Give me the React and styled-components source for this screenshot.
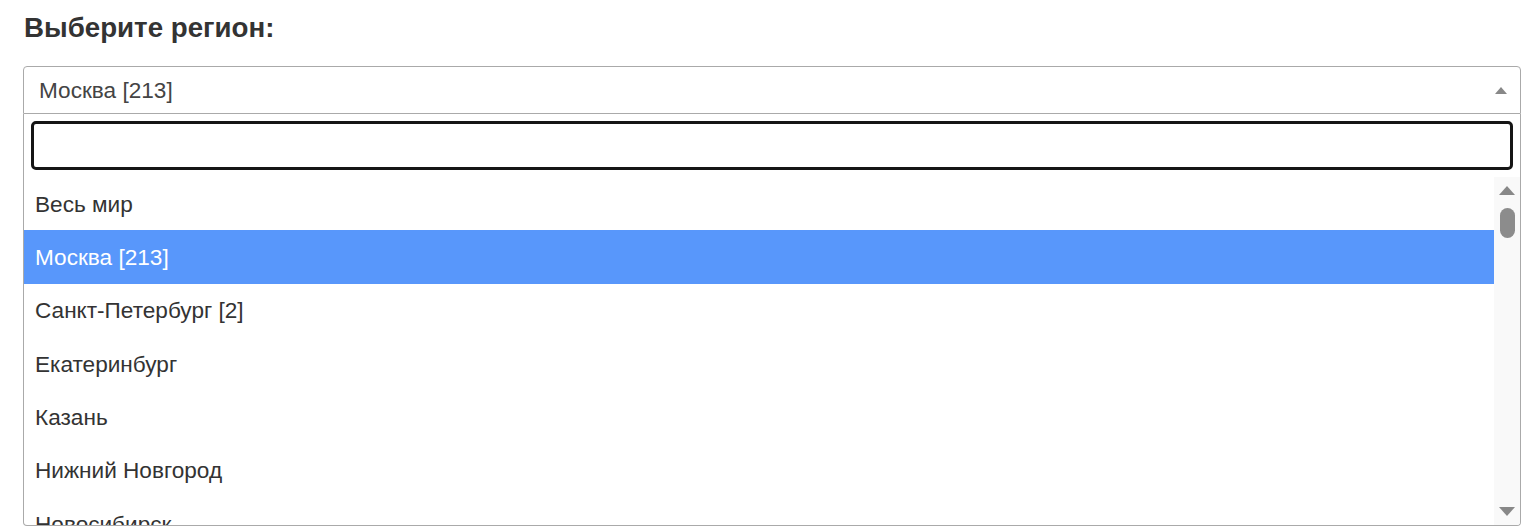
import React from "react";
import styled, { createGlobalStyle } from "styled-components";

const GlobalStyle = createGlobalStyle`
  html, body {
    margin: 0;
    padding: 0;
    background: #fff;
    font-family: "Liberation Sans", Arial, sans-serif;
  }
`;

const Page = styled.div`
  padding: 8px 13px 0 23px;
  height: 532px;
  box-sizing: border-box;
  overflow: hidden;
`;

const Title = styled.h2`
  margin: 0 0 18px 1px;
  height: 40px;
  line-height: 40px;
  font-size: 27.7px;
  font-weight: bold;
  color: #333;
`;

const Select = styled.div`
  width: 1498px;
  box-sizing: border-box;
`;

const Selection = styled.div`
  display: flex;
  align-items: center;
  justify-content: space-between;
  height: 48px;
  box-sizing: border-box;
  border: 1px solid #aaa;
  border-radius: 4px 4px 0 0;
  padding: 2px 13px 0 15px;
  font-size: 22.6px;
  color: #444;
`;

const Arrow = styled.span`
  width: 0;
  height: 0;
  border-left: 6px solid transparent;
  border-right: 6px solid transparent;
  border-bottom: 7px solid #888;
  margin-top: -1px;
`;

const Dropdown = styled.div`
  border: 1px solid #aaa;
  border-top: none;
  border-radius: 0 0 4px 4px;
  height: 412px;
  box-sizing: border-box;
  display: flex;
  flex-direction: column;
  overflow: hidden;
`;

const SearchWrap = styled.div`
  padding: 7px;
  flex: none;
`;

const Search = styled.input`
  display: block;
  width: 100%;
  height: 49px;
  box-sizing: border-box;
  border: 3px solid #151515;
  border-radius: 5px;
  outline: none;
  font-size: 22px;
  font-family: inherit;
  padding: 0 8px;
`;

const Results = styled.div`
  flex: 1;
  display: flex;
  min-height: 0;
`;

const Options = styled.ul`
  flex: 1;
  margin: 0;
  padding: 0;
  list-style: none;
  overflow: hidden;
`;

const Option = styled.li`
  height: 53.33px;
  box-sizing: border-box;
  display: flex;
  align-items: center;
  padding: 2px 11px 0;
  font-size: 22.6px;
  color: ${(p) => (p.$active ? "#fff" : "#333")};
  background: ${(p) => (p.$active ? "#5897fb" : "transparent")};
`;

const Scrollbar = styled.div`
  width: 26px;
  flex: none;
  background: #f9f9f9;
  display: flex;
  flex-direction: column;
  align-items: center;
  padding-top: 9px;
  padding-bottom: 9px;
  box-sizing: border-box;
`;

const ScrollArrow = styled.span`
  width: 0;
  height: 0;
  border-left: 8px solid transparent;
  border-right: 8px solid transparent;
  ${(p) => (p.$down ? "border-top: 9px solid #888;" : "border-bottom: 9px solid #888;")}
`;

const Thumb = styled.div`
  width: 15px;
  height: 30px;
  border-radius: 8px;
  background: #8c8c8c;
  margin-top: 13px;
`;

const Spacer = styled.div`
  flex: 1;
`;

const regions = [
  "Весь мир",
  "Москва [213]",
  "Санкт-Петербург [2]",
  "Екатеринбург",
  "Казань",
  "Нижний Новгород",
  "Новосибирск",
];

export default function App() {
  return (
    <>
      <GlobalStyle />
      <Page>
        <Title>Выберите регион:</Title>
        <Select>
          <Selection>
            <span>Москва [213]</span>
            <Arrow />
          </Selection>
          <Dropdown>
            <SearchWrap>
              <Search type="search" />
            </SearchWrap>
            <Results>
              <Options>
                {regions.map((r) => (
                  <Option key={r} $active={r === "Москва [213]"}>
                    {r}
                  </Option>
                ))}
              </Options>
              <Scrollbar>
                <ScrollArrow />
                <Thumb />
                <Spacer />
                <ScrollArrow $down />
              </Scrollbar>
            </Results>
          </Dropdown>
        </Select>
      </Page>
    </>
  );
}
